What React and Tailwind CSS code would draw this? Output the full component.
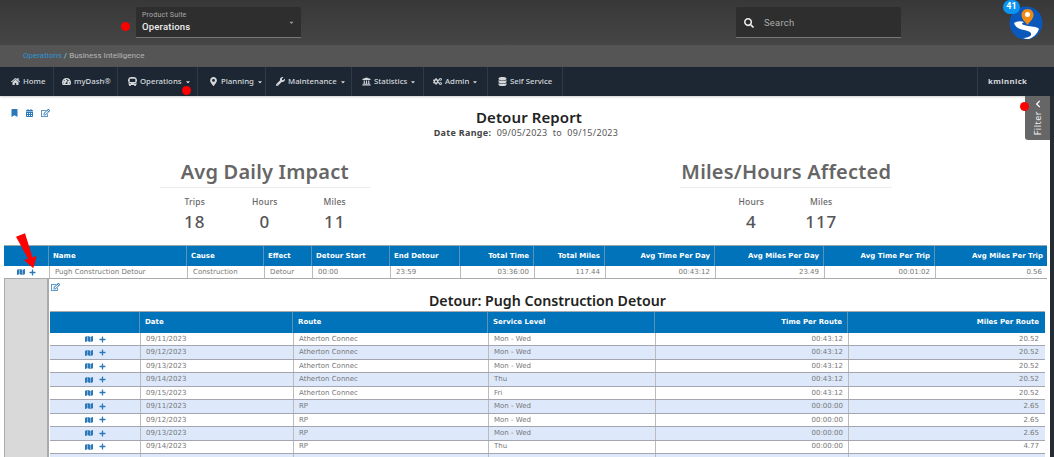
import React from 'react';
import { FaHome, FaTachometerAlt, FaBus, FaMapMarkerAlt, FaWrench, FaUniversity, FaCogs, FaDatabase, FaBookmark, FaCalendarAlt, FaRegEdit, FaMap, FaPlus, FaSearch, FaChevronLeft, FaCaretDown } from 'react-icons/fa';

const nav = [
  ['Home', FaHome, 'w-[54px] pl-[11px]', false],
  ['myDash®', FaTachometerAlt, 'w-[64px] pl-[8px]', false],
  ['Operations', FaBus, 'w-[80px] pl-[10px]', true],
  ['Planning', FaMapMarkerAlt, 'w-[68px] pl-[11px]', true],
  ['Maintenance', FaWrench, 'w-[86px] pl-[10px]', true],
  ['Statistics', FaUniversity, 'w-[72px] pl-[10px]', true],
  ['Admin', FaCogs, 'w-[64px] pl-[9px]', true],
  ['Self Service', FaDatabase, 'w-[75px] pl-[10px]', false],
];

const outerCols = 'grid-cols-[45px_138px_77px_48px_78px_70px_74px_71px_110px_109px_111px_112px]';
const innerCols = 'grid-cols-[90px_153px_195px_167px_193px_196px]';

const outerHead = [['', ''], ['Name', 'l'], ['Cause', 'l'], ['Effect', 'l'], ['Detour Start', 'l'], ['End Detour', 'l'], ['Total Time', 'r'], ['Total Miles', 'r'], ['Avg Time Per Day', 'r'], ['Avg Miles Per Day', 'r'], ['Avg Time Per Trip', 'r'], ['Avg Miles Per Trip', 'r']];
const outerRow = [['Pugh Construction Detour', 'l'], ['Construction', 'l'], ['Detour', 'l'], ['00:00', 'l'], ['23:59', 'l'], ['03:36:00', 'r'], ['117.44', 'r'], ['00:43:12', 'r'], ['23.49', 'r'], ['00:01:02', 'r'], ['0.56', 'r']];
const innerHead = [['', ''], ['Date', 'l'], ['Route', 'l'], ['Service Level', 'l'], ['Time Per Route', 'r'], ['Miles Per Route', 'r']];
const rows = [
  ['09/11/2023', 'Atherton Connec', 'Mon - Wed', '00:43:12', '20.52'],
  ['09/12/2023', 'Atherton Connec', 'Mon - Wed', '00:43:12', '20.52'],
  ['09/13/2023', 'Atherton Connec', 'Mon - Wed', '00:43:12', '20.52'],
  ['09/14/2023', 'Atherton Connec', 'Thu', '00:43:12', '20.52'],
  ['09/15/2023', 'Atherton Connec', 'Fri', '00:43:12', '20.52'],
  ['09/11/2023', 'RP', 'Mon - Wed', '00:00:00', '2.65'],
  ['09/12/2023', 'RP', 'Mon - Wed', '00:00:00', '2.65'],
  ['09/13/2023', 'RP', 'Mon - Wed', '00:00:00', '2.65'],
  ['09/14/2023', 'RP', 'Thu', '00:00:00', '4.77'],
];

function Stat({ label, value }) {
  return (
    <div className="w-[70px] flex flex-col items-center">
      <div className="text-[8.5px] leading-[12px] font-medium tracking-[0.2px] text-[#666]">{label}</div>
      <div className="mt-[3px] text-[17px] leading-[22px] tracking-[1px] font-medium text-[#555]">{value}</div>
    </div>
  );
}

function StatBlock({ title, lineW, items }) {
  return (
    <div className="flex flex-col items-center">
      <div className={`${lineW} h-[29px] border-b border-[#ececec] text-center whitespace-nowrap text-[20px] leading-[26px] font-semibold tracking-[0.2px] text-[#666]`}>{title}</div>
      <div className="mt-[8px] flex">
        {items.map(([l, v]) => <Stat key={l} label={l} value={v} />)}
      </div>
    </div>
  );
}

function Actions({ gap }) {
  return (
    <div className={`flex h-full items-center justify-center ${gap} text-[#2b78b8]`}>
      <FaMap className="w-[8px] h-[8px]" />
      <FaPlus className="w-[7px] h-[7px]" />
    </div>
  );
}

export default function App() {
  return (
    <div className="relative w-[1054px] h-[457px] overflow-hidden bg-white font-['Noto_Sans',sans-serif]">
      <header className="h-[45px] bg-gradient-to-b from-[#383838] to-[#454545] flex items-start font-['Roboto',sans-serif]">
        <div className="ml-[136px] mt-[7px] w-[165px] h-[31px] rounded-t-[2px] bg-[#2e2e2e] border-b border-[#777] flex items-center justify-between pl-[6px] pr-[6px]">
          <div>
            <div className="text-[7px] leading-[9px] text-[#aaa] tracking-[0.2px]">Product Suite</div>
            <div className="text-[9.5px] leading-[13px] text-[#eee] font-medium tracking-[0.2px]">Operations</div>
          </div>
          <FaCaretDown className="w-[7px] h-[7px] text-[#999]" />
        </div>
        <div className="ml-[435px] mt-[7px] w-[165px] h-[31px] pt-[2px] rounded-t-[2px] bg-[#2e2e2e] border-b border-[#777] flex items-center pl-[8px]">
          <FaSearch className="w-[10px] h-[10px] text-[#eee]" />
          <span className="ml-[10px] text-[9.5px] text-[#aaa] tracking-[0.2px]">Search</span>
        </div>
      </header>

      <div className="h-[22px] bg-[#555] flex items-center pl-[23px] text-[8px] text-[#b5b5b5] font-['Roboto',sans-serif]">
        <span className="text-[#2f93d6]">Operations</span>
        <span className="mx-[2px] text-[#9cc]">/</span>
        <span>Business Intelligence</span>
      </div>

      <nav className="h-[29px] bg-[#1c2733] flex text-[7.8px] font-medium text-[#d5d8db] shadow-[0_1px_2px_rgba(0,0,0,0.2)]">
        {nav.map(([label, Icon, w, caret]) => (
          <div key={label} className={`${w} h-full flex items-center gap-[3px] border-r border-[#2f3a47] last:border-r-0`}>
            <Icon className="w-[9px] h-[9px] shrink-0" />
            <span className="whitespace-nowrap">{label}</span>
            {caret && <FaCaretDown className="w-[6px] h-[6px]" />}
          </div>
        ))}
        <div className="ml-auto w-[77px] h-full border-l border-[#2f3a47] flex items-center pl-[10px] font-bold tracking-[0.4px]">kminnick</div>
      </nav>

      <main className="relative h-[361px]">
        <div className="absolute left-[11px] top-[13px] flex gap-[8px] text-[#2b78b8]">
          <FaBookmark className="w-[7px] h-[8px]" />
          <FaCalendarAlt className="w-[7px] h-[8px]" />
          <FaRegEdit className="w-[9px] h-[8px]" />
        </div>

        <div className="pt-[12px] text-center">
          <div className="pl-[4px] text-[15px] leading-[18px] font-semibold tracking-[0.1px] text-[#222]">Detour Report</div>
          <div className="pr-[2px] text-[9px] leading-[12px] tracking-[0.3px] text-[#555] mt-[1px]"><span className="font-bold text-[#444]">Date Range:</span>&nbsp; 09/05/2023&nbsp; to&nbsp; 09/15/2023</div>
        </div>

        <div className="mt-[20px] ml-[4px] w-[1043px] grid grid-cols-2">
          <StatBlock title="Avg Daily Impact" lineW="w-[210px]" items={[['Trips', '18'], ['Hours', '0'], ['Miles', '11']]} />
          <StatBlock title="Miles/Hours Affected" lineW="w-[212px]" items={[['Hours', '4'], ['Miles', '117']]} />
        </div>

        <div className="mt-[12px] ml-[4px] w-[1043px] border-t border-[#9aa] font-['DejaVu_Sans',sans-serif] text-[7px]">
          <div className={`grid ${outerCols} h-[20px] bg-[#0073bb] text-white font-bold`}>
            {outerHead.map(([t, a], i) => (
              <div key={i} className={`flex items-center px-[4px] border-r border-[#5a93b8] last:border-r-0 ${a === 'r' ? 'justify-end' : ''}`}>{t}</div>
            ))}
          </div>
          <div className={`grid ${outerCols} h-[13px] text-[#777] border-b border-[#aaa]`}>
            <Actions gap="gap-[4px]" />
            {outerRow.map(([t, a], i) => (
              <div key={i} className={`flex items-center px-[5px] border-l border-[#bbb] ${a === 'r' ? 'justify-end' : ''}`}>{t}</div>
            ))}
          </div>
          <div className="flex">
            <div className="w-[45px] h-[200px] bg-[#d9d9d9] border-l border-[#aaa] border-r-2 border-r-[#aaa] shrink-0" />
            <div className="w-[995px] ml-[1px]">
              <div className="h-[32px] relative">
                <FaRegEdit className="absolute left-[1px] top-[4px] w-[9px] h-[8px] text-[#2b78b8]" />
                <div className="pt-[13px] text-center font-['Noto_Sans',sans-serif] text-[14.2px] leading-[18px] font-semibold text-[#222]">Detour: Pugh Construction Detour</div>
              </div>
              <div className={`grid ${innerCols} h-[22px] bg-[#0073bb] text-white font-bold border-t border-[#aaa]`}>
                {innerHead.map(([t, a], i) => (
                  <div key={i} className={`flex items-center px-[5px] border-r border-[#5a93b8] last:border-r-0 ${a === 'r' ? 'justify-end' : ''}`}>{t}</div>
                ))}
              </div>
              {rows.map((r, idx) => (
                <div key={idx} className={`grid ${innerCols} h-[13.45px] border-b border-[#a5a5b0] text-[#777] ${idx % 2 ? 'bg-[#dde9fb]' : 'bg-white'}`}>
                  <Actions gap="gap-[6px]" />
                  {r.map((t, i) => (
                    <div key={i} className={`flex items-center px-[5px] border-l border-[#bbb] ${i > 2 ? 'justify-end' : ''}`}>{t}</div>
                  ))}
                </div>
              ))}
              <div className={`grid ${innerCols} h-[13px] bg-[#dde9fb]`}>
                <div />
                <div className="border-l border-[#bbb]" />
                <div className="border-l border-[#bbb]" />
                <div className="border-l border-[#bbb]" />
                <div className="border-l border-[#bbb]" />
                <div className="border-l border-[#bbb]" />
              </div>
            </div>
          </div>
        </div>

        <div className="absolute left-[1025px] top-0 w-[25px] h-[44px] bg-[#666] flex flex-col items-center pt-[4px] text-[#eee] rounded-bl-[3px]">
          <FaChevronLeft className="w-[8px] h-[8px] text-white" />
          <span className="mt-[3px] text-[9px] leading-[10px] tracking-[0.5px] [writing-mode:vertical-rl] rotate-180">Filter</span>
        </div>
        <div className="absolute right-0 top-0 w-[4px] h-full bg-[#262c34]" />
      </main>

      <div className="absolute left-[1003px] top-0 w-[17px] h-[14px] rounded-full bg-[#0b95f3] flex items-center justify-center font-['Roboto',sans-serif] text-[9px] font-bold text-white z-10">41</div>
      <svg className="absolute left-[1009px] top-[6px]" width="34" height="34" viewBox="0 0 34 34">
        <circle cx="17" cy="17" r="16.5" fill="#0a58bb" />
        <path d="M5 17c3-2 7-2 10-1-2 1-3 2 0 3 5 2 11 1 14 3l1 1c-2 5-5 8-10 10-2 0-4 0-6-1 3 0 7-1 8-3 1-3-3-4-7-5-5-1-9-3-10-7z" fill="#fff" />
        <path d="M18.5 3c-4 0-6 3-6 6 0 4 4 7 6 10 2-3 6-6 6-10 0-3-2-6-6-6z" fill="#ee8a12" />
        <circle cx="18.5" cy="8.5" r="2.5" fill="#fff" />
      </svg>

      <div className="absolute left-[121px] top-[22px] w-[9px] h-[9px] rounded-full bg-[#f00]" />
      <div className="absolute left-[182px] top-[86px] w-[9px] h-[9px] rounded-full bg-[#f00]" />
      <div className="absolute left-[1020px] top-[102px] w-[9px] h-[9px] rounded-full bg-[#f00]" />
      <svg className="absolute left-[12px] top-[230px]" width="30" height="42" viewBox="0 0 30 42">
        <polygon points="4,6.7 13,3.3 20.5,27.5 24.7,25.7 21.3,38.3 12,30 16,28.5" fill="#f00" />
      </svg>
    </div>
  );
}
